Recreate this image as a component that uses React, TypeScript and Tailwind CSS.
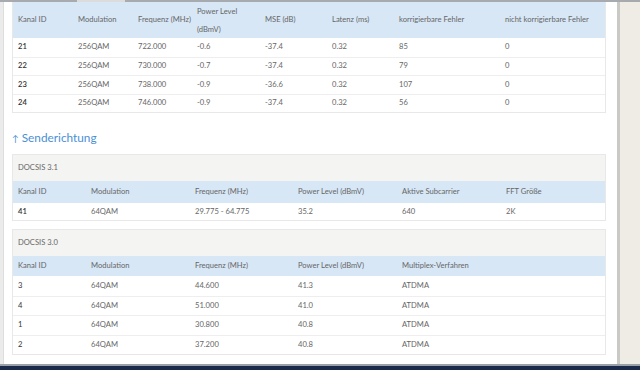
const downRows = [
  ['21', '256QAM', '722.000', '-0.6', '-37.4', '0.32', '85', '0'],
  ['22', '256QAM', '730.000', '-0.7', '-37.4', '0.32', '79', '0'],
  ['23', '256QAM', '738.000', '-0.9', '-36.6', '0.32', '107', '0'],
  ['24', '256QAM', '746.000', '-0.9', '-37.4', '0.32', '56', '0'],
];

const upRows30 = [
  ['3', '64QAM', '44.600', '41.3', 'ATDMA'],
  ['4', '64QAM', '51.000', '41.0', 'ATDMA'],
  ['1', '64QAM', '30.800', '40.8', 'ATDMA'],
  ['2', '64QAM', '37.200', '40.8', 'ATDMA'],
];

// column widths of the first (downstream) table
const downCols = ['w-[60px] shrink-0', 'w-[60px] shrink-0', 'w-[59px] shrink-0', 'w-[68px] shrink-0', 'w-[67px] shrink-0', 'w-[67px] shrink-0', 'w-[106px] shrink-0', 'flex-1'];
// column widths of the upstream tables
const upCols = ['w-[73px] shrink-0', 'w-[104px] shrink-0', 'w-[103px] shrink-0', 'w-[104px] shrink-0', 'w-[104px] shrink-0', 'flex-1'];

const Cell = ({ cls, first, children }: { cls: string; first?: boolean; children: React.ReactNode }) => (
  <div className={`${cls} pl-[5px] whitespace-nowrap ${first ? 'text-[#333] font-semibold' : 'text-[#666]'}`}>{children}</div>
);

const App = () => {
  return (
    <div className="w-[640px] h-[370px] flex flex-col overflow-hidden bg-[#efece6] text-[7.6px] leading-none" style={{ fontFamily: 'Lato, "Open Sans", sans-serif' }}>
      {/* top edge */}
      <div className="h-[2px] flex bg-[#a7abb0]">
        <div className="w-[77px]" />
        <div className="w-[48px] bg-[#dcdcdc]" />
      </div>

      <div className="flex-1 flex min-h-0">
        <div className="w-[4px] bg-[#ebebeb] border-r border-[#dedede]" />

        <div className="w-[613px] bg-white pl-[8px] pr-[11px]">
          {/* Empfangsrichtung, rest of table */}
          <div className="border border-t-0 border-[#e8e8e8]">
            <div className="h-[36px] flex items-center bg-[#d7e7f6] text-[#666] whitespace-nowrap">
              <div className={`${downCols[0]} pl-[5px]`}>Kanal ID</div>
              <div className={`${downCols[1]} pl-[5px]`}>Modulation</div>
              <div className={`${downCols[2]} pl-[5px]`}>Frequenz (MHz)</div>
              <div className={`${downCols[3]} pl-[5px] leading-[18px]`}>Power Level<br />(dBmV)</div>
              <div className={`${downCols[4]} pl-[5px]`}>MSE (dB)</div>
              <div className={`${downCols[5]} pl-[5px]`}>Latenz (ms)</div>
              <div className={`${downCols[6]} pl-[5px]`}>korrigierbare Fehler</div>
              <div className={`${downCols[7]} pl-[5px]`}>nicht korrigierbare Fehler</div>
            </div>
            {downRows.map((r, i) => (
              <div key={i} className={`h-[18.5px] flex items-center ${i > 0 ? 'border-t border-[#eeeeee]' : ''}`}>
                {r.map((v, j) => (
                  <Cell key={j} cls={downCols[j]} first={j === 0}>{v}</Cell>
                ))}
              </div>
            ))}
          </div>

          {/* Senderichtung heading */}
          <div className="h-[41px] flex items-center gap-[3px] pt-[9px] text-[#4a8fd6]">
            <span className="text-[9px]">↑</span>
            <span className="text-[11.8px]">Senderichtung</span>
          </div>

          {/* DOCSIS 3.1 */}
          <div className="border border-[#e8e8e8]">
            <div className="h-[26px] flex items-center pl-[5px] bg-[#f4f4f2] text-[#666]">DOCSIS 3.1</div>
            <div className="h-[22px] flex items-center bg-[#d7e7f6] text-[#666] whitespace-nowrap">
              {['Kanal ID', 'Modulation', 'Frequenz (MHz)', 'Power Level (dBmV)', 'Aktive Subcarrier', 'FFT Größe'].map((h, j) => (
                <div key={j} className={`${upCols[j]} pl-[5px]`}>{h}</div>
              ))}
            </div>
            <div className="h-[17px] flex items-center">
              {['41', '64QAM', '29.775 - 64.775', '35.2', '640', '2K'].map((v, j) => (
                <Cell key={j} cls={upCols[j]} first={j === 0}>{v}</Cell>
              ))}
            </div>
          </div>

          {/* DOCSIS 3.0 */}
          <div className="mt-[8px] border border-[#e8e8e8]">
            <div className="h-[26px] flex items-center pl-[5px] bg-[#f4f4f2] text-[#666]">DOCSIS 3.0</div>
            <div className="h-[20px] flex items-center bg-[#d7e7f6] text-[#666] whitespace-nowrap">
              {['Kanal ID', 'Modulation', 'Frequenz (MHz)', 'Power Level (dBmV)', 'Multiplex-Verfahren'].map((h, j) => (
                <div key={j} className={`${upCols[j]} pl-[5px]`}>{h}</div>
              ))}
            </div>
            {upRows30.map((r, i) => (
              <div key={i} className={`h-[19.5px] flex items-center ${i > 0 ? 'border-t border-[#eeeeee]' : ''}`}>
                {r.map((v, j) => (
                  <div key={j} className={`${upCols[j]} pl-[5px] ${j === 0 ? 'text-[#333]' : 'text-[#666]'}`}>{v}</div>
                ))}
              </div>
            ))}
          </div>
        </div>

        <div className="w-[3px] bg-[#c9c9c6]" />
        <div className="flex-1 bg-[#efece6]" />
      </div>

      {/* taskbar edge */}
      <div className="h-[2px] bg-[#9aa0a8]" />
      <div className="h-[4px] bg-[#1b2a4a]" />
    </div>
  );
};

export default App;
